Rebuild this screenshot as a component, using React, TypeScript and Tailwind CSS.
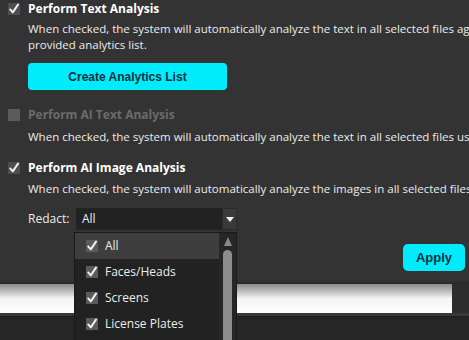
import React from "react"

function Check({ on = true, dim = false }: { on?: boolean; dim?: boolean }) {
  return (
    <div className={`relative w-[12px] h-[12px] shrink-0 ${dim ? "bg-[#5b5b5b]" : "bg-[#4e4e4e]"}`}>
      {on && (
        <svg viewBox="0 0 12 12" className="absolute inset-0 w-[12px] h-[12px]">
          <path d="M2.2 6.4 L4.8 9.4 L10 1.6" fill="none" stroke="#f2f2f2" strokeWidth="1.9" strokeLinecap="round" strokeLinejoin="round" />
        </svg>
      )}
    </div>
  )
}

const font = { fontFamily: '"Open Sans", "Noto Sans", sans-serif' }
const btnFont = { fontFamily: '"Liberation Sans", Arial, sans-serif' }

export default function App() {
  const items = ["All", "Faces/Heads", "Screens", "License Plates"]

  return (
    <div className="relative w-[469px] h-[340px] overflow-hidden bg-[#262626] text-[#ececec]" style={font}>
      {/* dialog */}
      <div className="h-[282px] bg-[#333333] flex flex-col pl-[8px] pr-[4px]">
        <div className="flex items-center gap-[8px] h-[16px] mt-[1px]">
          <Check />
          <span className="text-[12px] font-bold text-white">Perform Text Analysis</span>
        </div>
        <div className="ml-[20px] mt-[4px] text-[11.5px] leading-[16px] whitespace-nowrap">
          <div>When checked, the system will automatically analyze the text in all selected files against the</div>
          <div>provided analytics list.</div>
        </div>
        <button className="ml-[20px] mt-[10px] w-[199px] h-[27px] rounded-[4px] bg-[#00ecfc] text-[12px] font-bold text-[#0b2f3e]" style={btnFont}>
          Create Analytics List
        </button>

        <div className="flex items-center gap-[8px] h-[16px] mt-[17px]">
          <Check on={false} dim />
          <span className="text-[12px] font-bold text-[#6b6b6b]">Perform AI Text Analysis</span>
        </div>
        <div className="ml-[20px] mt-[6px] text-[11.5px] leading-[16px] whitespace-nowrap">
          When checked, the system will automatically analyze the text in all selected files using AI.
        </div>

        <div className="flex items-center gap-[8px] h-[16px] mt-[15px]">
          <Check />
          <span className="text-[12px] font-bold text-white">Perform AI Image Analysis</span>
        </div>
        <div className="ml-[20px] mt-[5px] text-[11.5px] leading-[16px] whitespace-nowrap">
          When checked, the system will automatically analyze the images in all selected files using AI.
        </div>

        <div className="flex items-center ml-[20px] mt-[11px] h-[22px]">
          <span className="text-[12px] w-[48px]">Redact:</span>
          <div className="flex items-stretch w-[161px] h-[22px] bg-[#222222]">
            <span className="flex-1 pl-[6px] text-[12px] leading-[22px]">All</span>
            <div className="w-[15px] flex items-center justify-center bg-[#3a3a3a] border border-[#2a2a2a]">
              <svg viewBox="0 0 8 5" className="w-[8px] h-[5px]">
                <path d="M0 0 L8 0 L4 5 Z" fill="#f0f0f0" />
              </svg>
            </div>
          </div>
        </div>

        <button className="self-end mt-[14px] w-[62px] h-[27px] rounded-[5px] bg-[#00ecfc] text-[13px] font-bold text-[#0b2f3e]" style={btnFont}>
          Apply
        </button>
      </div>

      {/* window behind */}
      <div className="h-[2px] bg-[#2a2a2a]" />
      <div className="flex h-[29px]">
        <div className="w-[452px] bg-gradient-to-b from-[#8a8a8a] via-[#f4f4f4] to-white" />
        <div className="flex-1 bg-[#2d2d2d]" />
      </div>
      <div className="h-[4px] bg-[#3a3a3a] border-b border-[#1e1e1e]" />

      {/* popup list */}
      <div className="absolute left-[74px] top-[232px] w-[163px] h-[120px] bg-[#222222] border border-[#1a1a1a] flex">
        <div className="flex-1 flex flex-col">
          {items.map((it, i) => (
            <div key={it} className={`flex items-center h-[26px] pl-[11px] gap-[7px] ${i === 0 ? "bg-[#3e3e3e]" : ""}`}>
              <Check dim />
              <span className="text-[12px] text-[#ececec]">{it}</span>
            </div>
          ))}
        </div>
        <div className="w-[17px] bg-[#262626] flex flex-col items-center pt-[4px]">
          <svg viewBox="0 0 8 9" className="w-[8px] h-[9px]">
            <path d="M4 0 L8 9 L0 9 Z" fill="#8a8a8a" />
          </svg>
          <div className="mt-[4px] w-[9px] flex-1 rounded-t-[5px] bg-[#8d8d8d]" />
        </div>
      </div>
    </div>
  )
}
